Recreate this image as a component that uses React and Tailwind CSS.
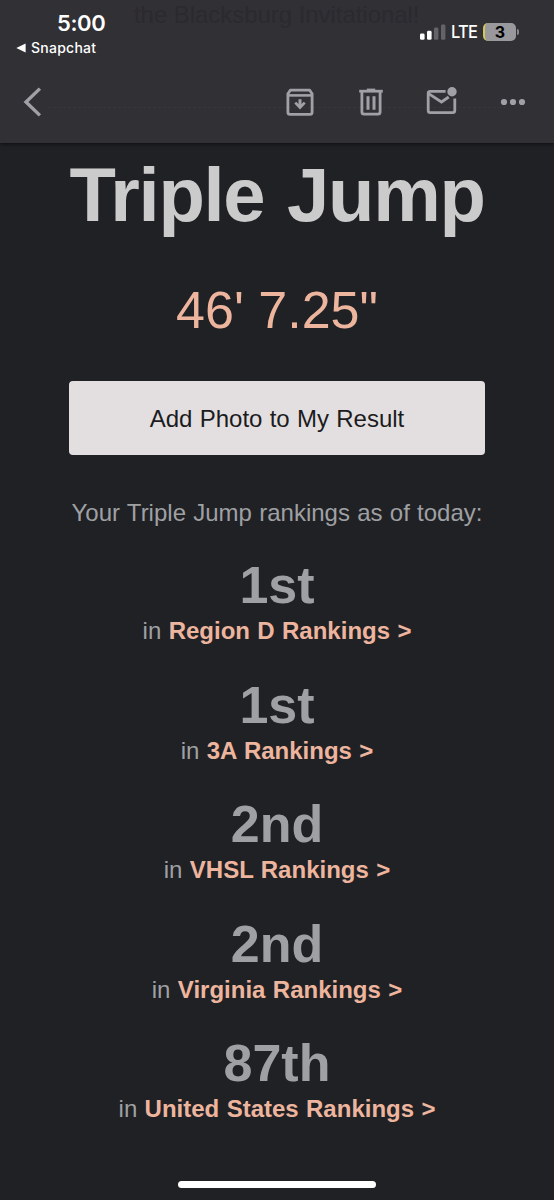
const RANKINGS = [
  { place: '1st',  list: 'Region D Rankings >' },
  { place: '1st',  list: '3A Rankings >' },
  { place: '2nd',  list: 'VHSL Rankings >' },
  { place: '2nd',  list: 'Virginia Rankings >' },
  { place: '87th', list: 'United States Rankings >' },
];

function StatusBar() {
  return (
    <div className="flex justify-between h-[64px] pl-4 pr-[35px] font-['Inter',sans-serif] text-white">
      <div className="pt-[10px]">
        <div className="pl-[41px] text-[22px] leading-[26px] font-semibold tracking-[-0.4px]">5:00</div>
        <div className="flex items-center gap-[5px] h-[24px]">
          <svg viewBox="0 0 10 10" className="w-[10px] h-[10px]" fill="currentColor">
            <path d="M0.3 5 9.6 0.6v8.8z" />
          </svg>
          <span className="text-[14px] leading-[20px] font-medium tracking-[0.25px]">Snapchat</span>
        </div>
      </div>

      <div className="flex items-center h-[20px] mt-[22px]">
        <svg viewBox="0 0 26 16" className="w-[26px] h-[16px]" fill="currentColor">
          <rect x="0" y="9.5" width="4.6" height="6.3" rx="1.4" />
          <rect x="7" y="6.8" width="4.6" height="9" rx="1.4" />
          <rect x="14" y="3.6" width="4.4" height="12.2" rx="1.4" opacity="0.25" />
          <rect x="21" y="0.4" width="4.4" height="15.4" rx="1.4" opacity="0.25" />
        </svg>
        <span className="ml-[5px] w-[28px] text-[17.5px] leading-[20px] font-medium tracking-[-0.8px] [transform-origin:left] scale-x-[0.94]">LTE</span>
        <div className="flex items-center ml-[4px]">
          <div className="w-[33px] h-[18px] rounded-[5px] bg-[#99989d] border-l-2 border-[#d3c759] text-black text-[16px] leading-[19px] font-bold text-center pr-[1px]">
            3
          </div>
          <div className="w-[2px] h-[6px] ml-px rounded-r-full bg-[#8a898e]" />
        </div>
      </div>
    </div>
  );
}

function Toolbar() {
  return (
    <div className="flex items-center h-[76px] px-[22px] text-[#a1a0a6]">
      <button title="Back">
        <svg viewBox="0 0 22 32" className="w-[22px] h-[32px]" fill="none" stroke="currentColor" strokeWidth={3.4}>
          <path d="M17.9 2.6 4 16l13.9 13.4" />
        </svg>
      </button>

      <button title="Archive" className="ml-[240px]">
        <svg viewBox="0 0 32 32" className="w-[32px] h-[32px]" fill="none" stroke="currentColor" strokeWidth={2.8}>
          <path strokeLinejoin="round" d="M3.9 7.8v18.4q0 2.2 2.2 2.2h19.8q2.2 0 2.2-2.2V7.8L25.7 4.2H6.3z" />
          <path d="M4 9.4h24" strokeWidth={2.6} />
          <path d="M16 13.2v6" strokeWidth={3} />
          <path d="M10.3 17.6 12.2 15.8 16 19.2 19.8 15.8 21.7 17.6 16 23.4z" fill="currentColor" stroke="none" />
        </svg>
      </button>

      <button title="Delete" className="ml-[39px]">
        <svg viewBox="0 0 32 32" className="w-[32px] h-[32px]" fill="none" stroke="currentColor" strokeWidth={2.8}>
          <path d="M4.2 5.2h23.6" />
          <path d="M11.8 4h8.4" strokeWidth={2.8} />
          <path strokeLinejoin="round" d="M6.9 6v20q0 2.2 2.2 2.2h13.8q2.2 0 2.2-2.2V6" />
          <path d="M13 10.2v13.6M19 10.2v13.6" strokeWidth={3} />
        </svg>
      </button>

      <button title="Mark as unread" className="ml-[37px]">
        <svg viewBox="0 0 34 32" className="w-[34px] h-[32px]" fill="none" stroke="currentColor" strokeWidth={2.8}>
          <path strokeLinejoin="round" d="M21.6 5.3H6.2Q4.2 5.3 4.2 7.3v17.2q0 2.2 2.2 2.2h22.2q2.2 0 2.2-2.2V12.4" />
          <path d="M4.6 7.6 17.5 16l7.2-5" />
          <circle cx="28" cy="5.7" r="4.7" fill="currentColor" stroke="none" />
        </svg>
      </button>

      <button title="More" className="ml-[41px]">
        <svg viewBox="0 0 28 32" className="w-[28px] h-[32px]" fill="currentColor">
          <circle cx="5" cy="16" r="3.1" />
          <circle cx="14" cy="16" r="3.1" />
          <circle cx="23" cy="16" r="3.1" />
        </svg>
      </button>
    </div>
  );
}

export default function App() {
  return (
    <div className="flex flex-col w-[554px] h-[1200px] overflow-hidden bg-[#202125] font-['Liberation_Sans',Arial,sans-serif] text-[#9fa0a3]">
      <header className="relative h-[143px] shrink-0 bg-[#313035] shadow-[0_1px_4px_rgba(0,0,0,0.65)]">
        {/* mail text showing faintly through the bar */}
        <div className="absolute left-[134px] top-0 text-[24px] leading-[30px] tracking-[-0.05px] whitespace-nowrap text-[#2b2a2f]">
          the Blacksburg Invitational!
        </div>
        <div className="absolute left-[48px] right-[48px] top-[107px] border-t border-dashed border-[#37363b]" />
        <div className="relative">
          <StatusBar />
          <Toolbar />
        </div>
      </header>

      <main className="flex flex-col items-center pt-[7px] text-center">
        <h1 className="text-[76px] leading-[90px] font-bold tracking-[-1.3px] [word-spacing:3px] text-[#cbcbcc] whitespace-nowrap">Triple Jump</h1>
        <p className="mt-[40px] text-[52px] leading-[60px] text-[#eeb59e]">46' 7.25"</p>

        <button className="mt-[41px] w-[416px] h-[74px] pt-[2px] rounded-[4px] bg-[#e3dfe0] text-[24px] [word-spacing:0.6px] text-[#1c1b1e]">
          Add Photo to My Result
        </button>

        <p className="mt-[43px] text-[24px] leading-[30px] [word-spacing:0.6px] whitespace-nowrap">
          Your Triple Jump rankings as of today:
        </p>

        <div className="mt-[27px] flex flex-col gap-[28.6px]">
          {RANKINGS.map(r => (
            <div key={r.list}>
              <p className="text-[52px] leading-[60px] font-bold">{r.place}</p>
              <p className="mt-px text-[24px] leading-[30px] [word-spacing:0.7px] whitespace-nowrap">
                in <a className="font-bold text-[#eeb59e]">{r.list}</a>
              </p>
            </div>
          ))}
        </div>
      </main>

      {/* home indicator */}
      <div className="mt-auto mb-[12px] mx-auto w-[198px] h-[7px] shrink-0 rounded-full bg-white" />
    </div>
  );
}
